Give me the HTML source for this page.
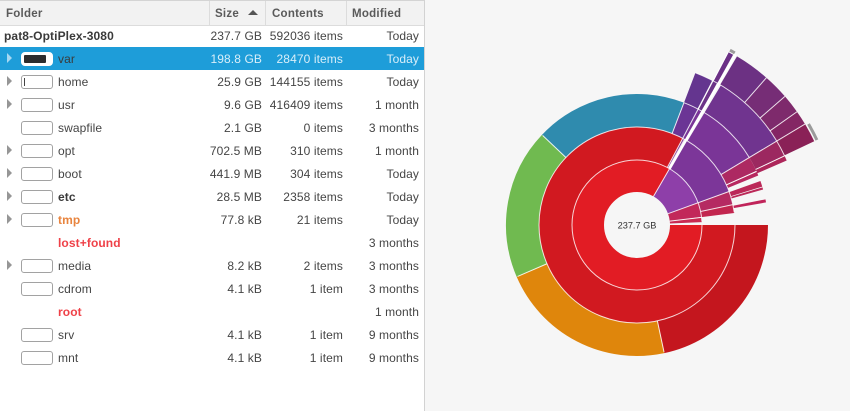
<!DOCTYPE html>
<html><head><meta charset="utf-8"><style>
html,body{margin:0;padding:0;width:850px;height:411px;overflow:hidden;background:#fff}
body{font-family:"Liberation Sans",sans-serif;font-size:12px;color:#454545;position:relative;letter-spacing:.1px;filter:blur(.35px)}
.hd{position:absolute;left:0;top:0;width:424px;height:26px;background:#f2f2f2;border-top:1px solid #d4d4d4;border-bottom:1px solid #dcdcdc;box-sizing:border-box}
.hd span{position:absolute;top:6px;font-weight:bold;font-size:11.5px;color:#5a5a5a;letter-spacing:.25px;line-height:14px}
.hd i{position:absolute;top:0;width:1px;height:24px;background:#dcdcdc}
.r{position:absolute;left:0;width:424px;height:23px;line-height:25px;white-space:nowrap}
.r b,.r u,.r s,.r em{position:absolute;top:0;font-style:normal;font-weight:normal;text-decoration:none}
.r b{left:58px}.r u{right:162px}.r s{right:81px}.r em{right:5px}
.a{position:absolute;left:7px;top:6px;width:0;height:0;border-left:5px solid #969696;border-top:5px solid transparent;border-bottom:5px solid transparent}
.m{position:absolute;left:21px;top:5px;width:32px;height:14px;box-sizing:border-box;border:1px solid #a2a2a2;border-radius:3px;background:#fff}
.r b.h{font-weight:bold}
.red{color:#ef4148}
.sel{background:#1e9dd9;color:#d8eef9}
.sel .a{border-left-color:#a6d8f2}
.sel .m{border-color:#fff;border-radius:4px}
.sel .m:after{content:"";position:absolute;left:2px;top:2px;width:22px;height:8px;background:#2c2c2e;border-radius:1px}
.sel b{color:#3a3a3a}
.pane{position:absolute;left:424px;top:0;width:426px;height:411px;background:#f6f6f6;border-left:1px solid #d2d2d2;box-sizing:border-box}
svg{position:absolute;left:0;top:0}
svg circle{fill:none}
</style></head><body>
<div class="hd">
<span style="left:6px">Folder</span><i style="left:209px"></i>
<span style="left:215px">Size</span>
<div style="position:absolute;left:248px;top:9px;border-left:5px solid transparent;border-right:5px solid transparent;border-bottom:5px solid #555"></div>
<i style="left:265px"></i><span style="left:272px">Contents</span><i style="left:346px"></i><span style="left:352px">Modified</span>
</div>
<div class="r" style="top:24px"><b class="h" style="left:4px;color:#3a3a3a">pat8-OptiPlex-3080</b><u>237.7 GB</u><s>592036 items</s><em>Today</em></div>
<div class="r sel" style="top:47px"><div class="a"></div><div class="m"></div><b>var</b><u>198.8 GB</u><s>28470 items</s><em>Today</em></div>
<div class="r" style="top:70px"><div class="a"></div><div class="m"><div style="position:absolute;left:2px;top:2px;width:1px;height:8px;background:#444"></div></div><b>home</b><u>25.9 GB</u><s>144155 items</s><em>Today</em></div>
<div class="r" style="top:93px"><div class="a"></div><div class="m"></div><b>usr</b><u>9.6 GB</u><s>416409 items</s><em>1 month</em></div>
<div class="r" style="top:116px"><div class="m"></div><b>swapfile</b><u>2.1 GB</u><s>0 items</s><em>3 months</em></div>
<div class="r" style="top:139px"><div class="a"></div><div class="m"></div><b>opt</b><u>702.5 MB</u><s>310 items</s><em>1 month</em></div>
<div class="r" style="top:162px"><div class="a"></div><div class="m"></div><b>boot</b><u>441.9 MB</u><s>304 items</s><em>Today</em></div>
<div class="r" style="top:185px"><div class="a"></div><div class="m"></div><b class="h" style="color:#3a3a3a">etc</b><u>28.5 MB</u><s>2358 items</s><em>Today</em></div>
<div class="r" style="top:208px"><div class="a"></div><div class="m"></div><b class="h" style="color:#e8843e">tmp</b><u>77.8 kB</u><s>21 items</s><em>Today</em></div>
<div class="r" style="top:231px"><b class="h red">lost+found</b><em>3 months</em></div>
<div class="r" style="top:254px"><div class="a"></div><div class="m"></div><b>media</b><u>8.2 kB</u><s>2 items</s><em>3 months</em></div>
<div class="r" style="top:277px"><div class="m"></div><b>cdrom</b><u>4.1 kB</u><s>1 item</s><em>3 months</em></div>
<div class="r" style="top:300px"><b class="h red">root</b><em>1 month</em></div>
<div class="r" style="top:323px"><div class="m"></div><b>srv</b><u>4.1 kB</u><s>1 item</s><em>9 months</em></div>
<div class="r" style="top:346px"><div class="m"></div><b>mnt</b><u>4.1 kB</u><s>1 item</s><em>9 months</em></div>
<div class="pane"></div>
<svg width="850" height="411" viewBox="0 0 850 411">
<g transform="translate(637 225)">
<!-- ring 1 -->
<g stroke-width="32">
<circle r="49" pathLength="360" stroke="#e21c24" stroke-dasharray="300 360" transform="rotate(-360)"/>
<circle r="49" pathLength="360" stroke="#8e3fa9" stroke-dasharray="40 360" transform="rotate(-60)"/>
<circle r="49" pathLength="360" stroke="#c2285a" stroke-dasharray="13 360" transform="rotate(-20)"/>
<circle r="49" pathLength="360" stroke="#c92a52" stroke-dasharray="4 360" transform="rotate(-6.5)"/>
</g>
<!-- ring 2 -->
<g stroke-width="33">
<circle r="81.5" pathLength="360" stroke="#d11920" stroke-dasharray="299 360" transform="rotate(-360)"/>
<circle r="81.5" pathLength="360" stroke="#7c3699" stroke-dasharray="39.5 360" transform="rotate(-59.5)"/>
<circle r="81.5" pathLength="360" stroke="#7c3699" stroke-dasharray="1.5 360" transform="rotate(-62)"/>
<circle r="81.5" pathLength="360" stroke="#b52a62" stroke-dasharray="8 360" transform="rotate(-20)"/>
<circle r="81.5" pathLength="360" stroke="#c2264f" stroke-dasharray="5 360" transform="rotate(-12)"/>
</g>
<!-- ring 3 -->
<g stroke-width="33">
<circle r="114.5" pathLength="360" stroke="#c4161e" stroke-dasharray="78 360" transform="rotate(-360)"/>
<circle r="114.5" pathLength="360" stroke="#df860c" stroke-dasharray="78.7 360" transform="rotate(-282)"/>
<circle r="114.5" pathLength="360" stroke="#70ba50" stroke-dasharray="66.8 360" transform="rotate(-203.3)"/>
<circle r="114.5" pathLength="360" stroke="#2f8bae" stroke-dasharray="67.5 360" transform="rotate(-136.5)"/>
<circle r="114.5" pathLength="360" stroke="#6b3595" stroke-dasharray="7 360" transform="rotate(-69)"/>
<circle r="114.5" pathLength="360" stroke="#7a3597" stroke-dasharray="1.5 360" transform="rotate(-62)"/>
<circle r="114.5" pathLength="360" stroke="#7a3597" stroke-dasharray="28 360" transform="rotate(-59)"/>
<circle r="114.5" pathLength="360" stroke="#ad2962" stroke-dasharray="6.7 360" transform="rotate(-31)"/>
<circle r="114.5" pathLength="360" stroke="#b82860" stroke-dasharray="1.7 360" transform="rotate(-23.9)"/>
<circle r="114.5" pathLength="360" stroke="#bb2858" stroke-dasharray="2.6 360" transform="rotate(-19.6)"/>
<circle r="114.5" pathLength="360" stroke="#bb2858" stroke-dasharray="1 360" transform="rotate(-16.7)"/>
<circle r="114.5" pathLength="360" stroke="#c0245a" stroke-dasharray="1.4 360" transform="rotate(-11.3)"/>
</g>
<!-- ring 4 -->
<g stroke-width="32" fill="none">
<path d="M52.7 -137.2A147 147 0 0 1 67.9 -130.4" stroke="#64358f"/>
<path d="M69 -129.8A147 147 0 0 1 72.4 -128" stroke="#6c3388"/>
<path d="M75.7 -126A147 147 0 0 1 126 -75.7" stroke="#70348f"/>
<path d="M126 -75.7A147 147 0 0 1 133 -62.6" stroke="#9c2860"/>
<path d="M133.2 -62.1A147 147 0 0 1 135 -58.1" stroke="#ad265a"/>
</g>
<!-- ring 5 -->
<g stroke-width="33" fill="none">
<path d="M84 -158A179 179 0 0 1 88.1 -155.8" stroke="#6b3086"/>
<path d="M91.6 -154.4A179.5 179.5 0 0 1 118.5 -134.9" stroke="#6c3183"/>
<path d="M118.5 -134.9A179.5 179.5 0 0 1 135.5 -117.8" stroke="#762d76"/>
<path d="M135.5 -117.8A179.5 179.5 0 0 1 146.5 -103.7" stroke="#7e2a6c"/>
<path d="M146.5 -103.7A179.5 179.5 0 0 1 153.9 -92.4" stroke="#842664"/>
<path d="M153.9 -92.4A179.5 179.5 0 0 1 162.3 -76.7" stroke="#8a2157"/>
</g>
<!-- grey marks -->
<path d="M171.5 -101A199 199 0 0 1 179.9 -85" fill="none" stroke="#9b9b9b" stroke-width="3"/>
<path d="M93 -174.8A198 198 0 0 1 97.8 -172.1" fill="none" stroke="#9b9b9b" stroke-width="3"/>
<!-- arc separators -->
<g stroke="#fff" stroke-opacity=".8" stroke-width="1" fill="none">
<circle r="65" pathLength="360" stroke-dasharray="357.5 360" transform="rotate(-360)"/>
<circle r="98" pathLength="360" stroke-dasharray="353 360" transform="rotate(-360)"/>
<circle r="131" pathLength="360" stroke-dasharray="38 360" transform="rotate(-69)"/>
<path d="M58.4 -152.2A163 163 0 0 1 147.7 -68.9"/>
</g>
<!-- radial separators -->
<g stroke="#fff" stroke-opacity=".85" stroke-width="1" fill="none">
<path d="M33 0H65" transform="rotate(-60)"/>
<path d="M33 0H98" transform="rotate(-20)"/>
<path d="M33 0H65" transform="rotate(-6.7)"/>
<path d="M65 0H98" transform="rotate(-12)"/>
<path d="M65 0H98" transform="rotate(-61)"/>
<path d="M98 0H130" transform="rotate(-282)"/>
<path d="M98 0H130" transform="rotate(-203.3)"/>
<path d="M98 0H130" transform="rotate(-136.5)"/>
<path d="M98 0H131" transform="rotate(-69)"/>
<path d="M98 0H163" transform="rotate(-31)"/>
<path d="M98 0H131" transform="rotate(-24.2)"/>
<path d="M131 0H163" transform="rotate(-25.1)"/>
<path d="M163 0H196" transform="rotate(-48.7)"/>
<path d="M163 0H196" transform="rotate(-41)"/>
<path d="M163 0H196" transform="rotate(-35.3)"/>
<path d="M163 0H196" transform="rotate(-31)"/>
<path d="M65 0H196" transform="rotate(-62.2)"/>
</g>
<path d="M65 0H197" transform="rotate(-60)" stroke="#fff" stroke-width="2.6"/>
<text x="0" y="3.5" text-anchor="middle" font-family="'Liberation Sans',sans-serif" font-size="9.2" letter-spacing="0" fill="#333">237.7 GB</text>
</g>
</svg>
</body></html>
